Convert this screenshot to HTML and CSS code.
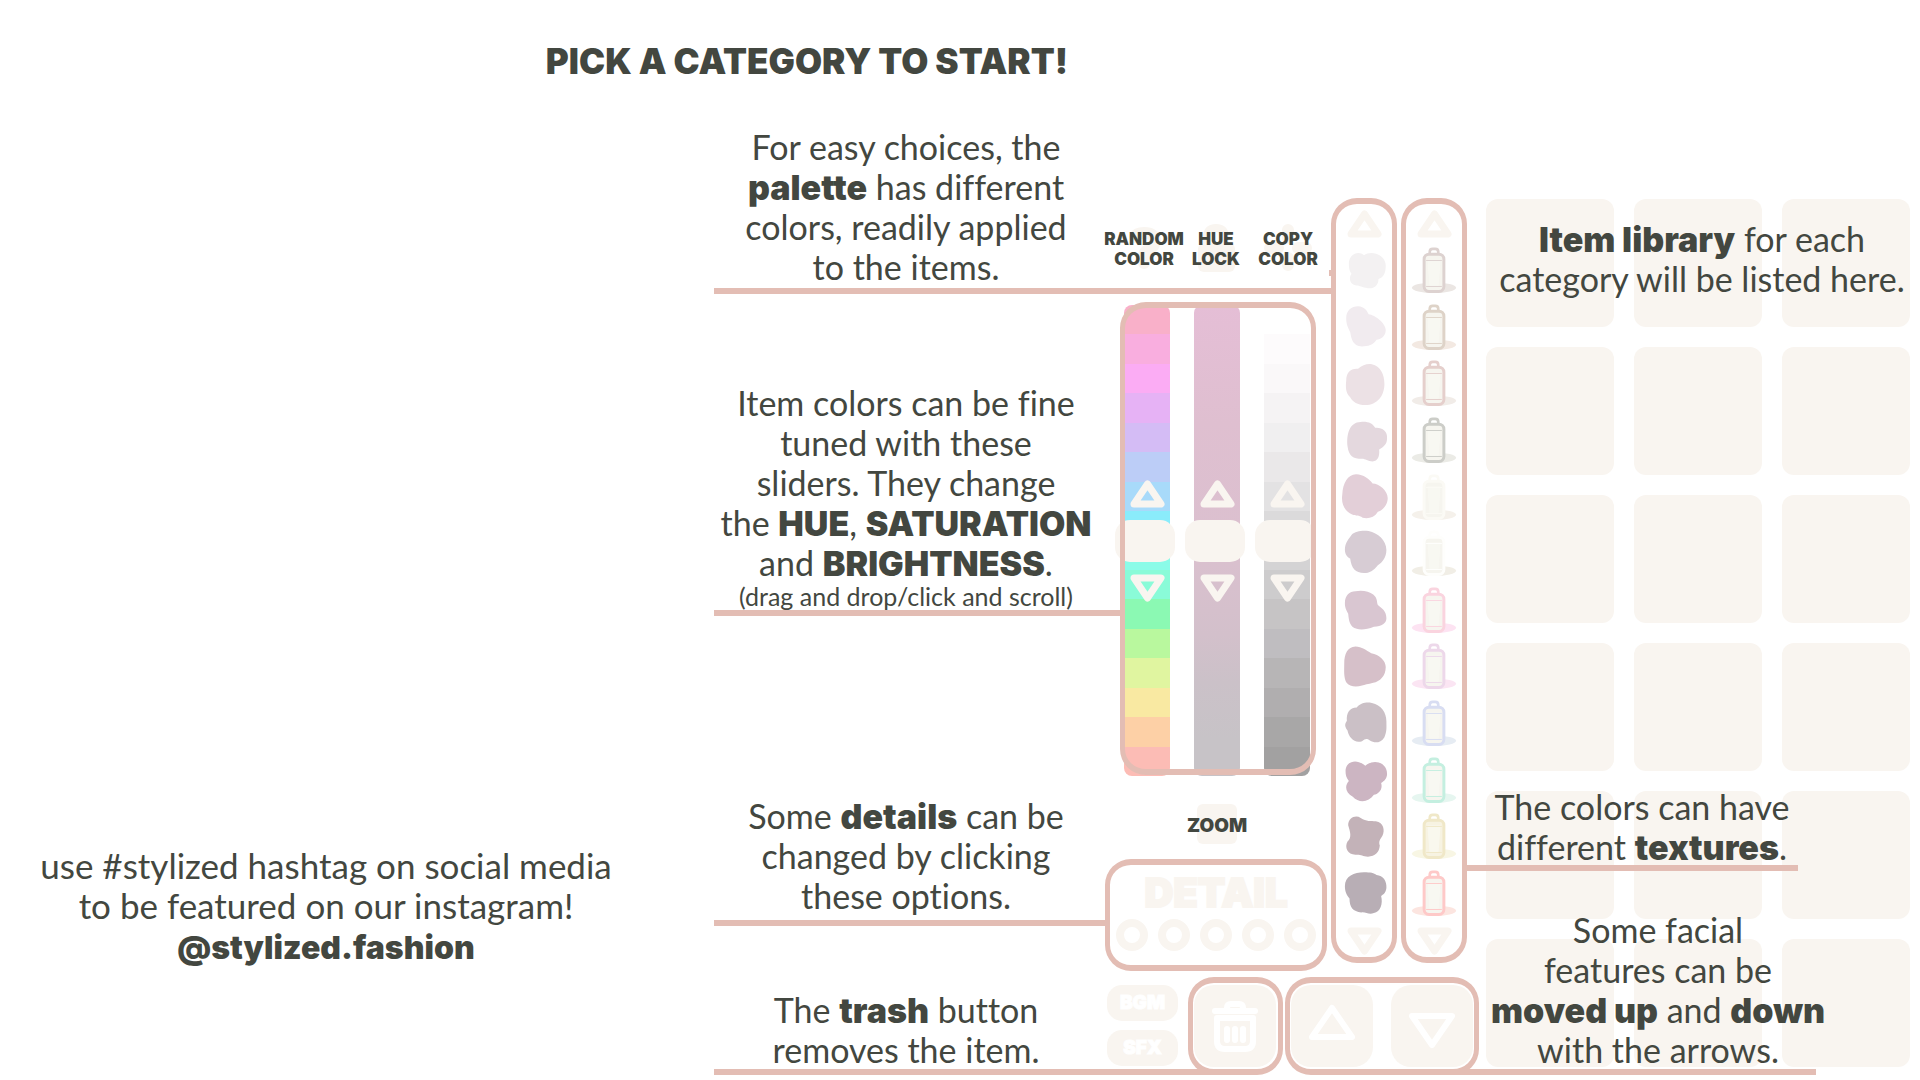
FILE: index.html
```html
<!DOCTYPE html>
<html lang="en">
<head>
<meta charset="utf-8">
<title>Stylized</title>
<link rel="stylesheet" href="styles.css">
</head>
<body>
<svg class="sprite" aria-hidden="true">
  <symbol id="up" viewBox="0 0 35 28"><path d="M17.5 4 31 24H4Z"/></symbol>
  <symbol id="down" viewBox="0 0 35 28"><path d="M17.5 24 31 4H4Z"/></symbol>
  <symbol id="bottle" viewBox="-72 -85 144 170">
    <ellipse class="floor" cx="0" cy="51" rx="67" ry="16"/>
    <path class="cap" d="M-13 -50v-8q0-9 9-9h8q9 0 9 9v8"/>
    <rect class="body" x="-30" y="-51" width="60" height="113" rx="15"/>
    <path class="shine" d="M-20-36H20L14 46H-14Z"/>
    <path class="seam" d="M-24-32H24M-24 47H24"/>
  </symbol>
</svg>

<main class="stage">
  <header class="header"><h1>PICK A CATEGORY TO START!</h1></header>

  <section class="intro">
    <p>use #stylized hashtag on social media<br>to be featured on our instagram!<br><b>@stylized.fashion</b></p>
  </section>

  <section class="guide">
    <p class="note note-palette">For easy choices, the<br><b>palette</b> has different<br>colors, readily applied<br>to the items.</p>
    <p class="note note-sliders">Item colors can be fine<br>tuned with these<br>sliders. They change<br>the <b>HUE</b>, <b>SATURATION</b><br>and <b>BRIGHTNESS</b>.<small>(drag and drop/click and scroll)</small></p>
    <p class="note note-detail">Some <b>details</b> can be<br>changed by clicking<br>these options.</p>
    <p class="note note-trash">The <b>trash</b> button<br>removes the item.</p>
  </section>

  <section class="tools">
    <div class="tools-top">
      <div class="controls">
        <div class="actions">
          <button class="action" type="button">
            <svg width="48" height="48" viewBox="0 0 48 48"><path d="M15 13Q17 9 24 9Q35 9 35 17Q35 22 28 26Q24 28 24 32M24 38v1"/></svg>
            <span>RANDOM<br>COLOR</span>
          </button>
          <button class="action" type="button">
            <svg width="48" height="48" viewBox="0 0 48 48"><path class="thin" d="M15 22V14Q15 4 24 4T33 14V22"/><rect class="solid" x="6" y="19" width="37" height="29" rx="6"/></svg>
            <span>HUE<br>LOCK</span>
          </button>
          <button class="action" type="button">
            <svg width="48" height="48" viewBox="0 0 48 48"><path d="M24 6v8M24 34v7M6 24h8M34 24h8"/></svg>
            <span>COPY<br>COLOR</span>
          </button>
        </div>

        <div class="sliders">
          <div class="slider">
            <input class="range hue" type="range" aria-label="Hue" value="50">
            <div class="steps"><button type="button" aria-label="Hue up"><svg class="tri"><use href="#up"/></svg></button><button type="button" aria-label="Hue down"><svg class="tri"><use href="#down"/></svg></button></div>
          </div>
          <div class="slider">
            <input class="range saturation" type="range" aria-label="Saturation" value="50">
            <div class="steps"><button type="button" aria-label="Saturation up"><svg class="tri"><use href="#up"/></svg></button><button type="button" aria-label="Saturation down"><svg class="tri"><use href="#down"/></svg></button></div>
          </div>
          <div class="slider">
            <input class="range brightness" type="range" aria-label="Brightness" value="50">
            <div class="steps"><button type="button" aria-label="Brightness up"><svg class="tri"><use href="#up"/></svg></button><button type="button" aria-label="Brightness down"><svg class="tri"><use href="#down"/></svg></button></div>
          </div>
        </div>

        <button class="zoom" type="button">ZOOM</button>

        <fieldset class="detail">
          <legend class="detail-title">DETAIL</legend>
          <div class="rings">
            <input type="radio" name="detail" aria-label="Detail 1">
            <input type="radio" name="detail" aria-label="Detail 2">
            <input type="radio" name="detail" aria-label="Detail 3">
            <input type="radio" name="detail" aria-label="Detail 4">
            <input type="radio" name="detail" aria-label="Detail 5">
          </div>
        </fieldset>
      </div>

      <div class="strip palette">
        <button type="button" aria-label="Previous colors"><svg class="tri"><use href="#up"/></svg></button>
        <div class="cells">
          <button type="button" aria-label="Color 1"><svg class="swatch" viewBox="-72 -85 144 170"><path fill="#f3f1f2" d="M-46-22C-46-50-18-64 0-48C22-64 66-50 66-16C66 8 58 20 44 24C44 44 30 54 12 52C-6 50-14 44-22 44C-42 42-48 22-38 8C-44 0-46-8-46-22Z"/></svg></button>
          <button type="button" aria-label="Color 2"><svg class="swatch" viewBox="-72 -85 144 170"><path fill="#f1ebef" d="M-54-30C-54-54-38-66-18-66C2-64 8-54 14-42C34-40 66-14 66 6C66 26 50 34 38 36C28 52 12 56-6 56C-36 54-38 32-42 12C-52-6-54-16-54-30Z"/></svg></button>
          <button type="button" aria-label="Color 3"><svg class="swatch" viewBox="-72 -85 144 170"><path fill="#ece1e5" d="M-54-10C-54-36-40-48-18-46C-6-58 10-62 24-60C50-54 62-30 62 0C62 36 40 64 4 64C-20 64-34 54-42 40C-56 28-56 8-54-10Z"/></svg></button>
          <button type="button" aria-label="Color 4"><svg class="swatch" viewBox="-72 -85 144 170"><path fill="#e4d8de" d="M-50 16C-54-20-44-58-10-58C12-60 26-54 34-40C54-42 72-30 70-8C70 10 60 18 46 26C48 46 42 62 26 62C12 62 4 54-6 54C-34 54-46 46-50 16Z"/></svg></button>
          <button type="button" aria-label="Color 5"><svg class="swatch" viewBox="-72 -85 144 170"><path fill="#e3cfd8" d="M-66-10C-64-46-50-70-24-72C0-70 14-60 26-44C46-44 72-22 72 0C72 22 56 38 42 42C32 60 12 64-4 60C-16 50-24 56-36 50C-58 40-70 20-66-10Z"/></svg></button>
          <button type="button" aria-label="Color 6"><svg class="swatch" viewBox="-72 -85 144 170"><path fill="#d7ccd4" d="M-58-14C-58-34-46-46-38-58C-26-72 0-72 14-70C42-64 68-42 68-12C68 10 56 26 42 34C30 50 16 58 0 58C-26 58-38 44-42 14C-52 8-58 0-58-14Z"/></svg></button>
          <button type="button" aria-label="Color 7"><svg class="swatch" viewBox="-72 -85 144 170"><path fill="#d9c6d1" d="M-58-24C-58-48-44-60-26-60C-6-64 16-60 28-50C42-38 38-28 42-18C54-8 68 0 68 22C68 38 54 46 30 48C10 56-10 58-22 54C-44 48-46 28-48 8C-56-6-58-12-58-24Z"/></svg></button>
          <button type="button" aria-label="Color 8"><svg class="swatch" viewBox="-72 -85 144 170"><path fill="#d6c0c9" d="M-60-10C-60-40-50-60-26-62C-6-62 6-50 22-42C46-38 66-20 66 0C66 28 48 44 28 48C12 52 2 54-6 56C-24 62-44 60-54 46C-62 30-60 10-60-10Z"/></svg></button>
          <button type="button" aria-label="Color 9"><svg class="swatch" viewBox="-72 -85 144 170"><path fill="#cbc0c6" d="M-52-10C-54-32-44-50-22-50C-8-66 8-66 24-64C52-58 68-36 68-8C68 10 70 22 62 40C50 60 30 58 18 50C6 42 4 46-6 52C-28 60-46 42-50 20C-60 6-58 0-52-10Z"/></svg></button>
          <button type="button" aria-label="Color 10"><svg class="swatch" viewBox="-72 -85 144 170"><path fill="#ccb5c2" d="M-56-30C-56-60-22-70 4-46C30-70 70-56 70-22C70-8 62 0 52 6C58 26 44 40 30 42C14 66-16 68-34 48C-56 36-60 16-46 0C-54-10-56-18-56-30Z"/></svg></button>
          <button type="button" aria-label="Color 11"><svg class="swatch" viewBox="-72 -85 144 170"><path fill="#c3b2b8" d="M-48-36C-48-58-26-68-10-58C8-46 20-50 36-48C60-44 64-20 56-4C48 8 44 14 48 26C46 48 34 58 12 60C-6 58-10 52-26 54C-50 54-60 32-50 14C-36 0-42-16-48-36Z"/></svg></button>
          <button type="button" aria-label="Color 12"><svg class="swatch" viewBox="-72 -85 144 170"><path fill="#b8aeb5" d="M-58-24C-58-54-30-66 0-66C20-66 30-64 38-58C58-56 70-40 68-18C66-2 58 2 52 6C58 30 50 54 30 58C14 64 6 54-8 56C-34 54-44 40-44 14C-52 4-58-6-58-24Z"/></svg></button>
        </div>
        <button type="button" aria-label="More colors"><svg class="tri"><use href="#down"/></svg></button>
      </div>

      <div class="strip textures">
        <button type="button" aria-label="Previous textures"><svg class="tri"><use href="#up"/></svg></button>
        <div class="cells">
          <button type="button" aria-label="Texture 1"><svg class="swatch t1"><use href="#bottle"/></svg></button>
          <button type="button" aria-label="Texture 2"><svg class="swatch t2"><use href="#bottle"/></svg></button>
          <button type="button" aria-label="Texture 3"><svg class="swatch t3"><use href="#bottle"/></svg></button>
          <button type="button" aria-label="Texture 4"><svg class="swatch t4"><use href="#bottle"/></svg></button>
          <button type="button" aria-label="Texture 5"><svg class="swatch t5"><use href="#bottle"/></svg></button>
          <button type="button" aria-label="Texture 6"><svg class="swatch t6"><use href="#bottle"/></svg></button>
          <button type="button" aria-label="Texture 7"><svg class="swatch t7"><use href="#bottle"/></svg></button>
          <button type="button" aria-label="Texture 8"><svg class="swatch t8"><use href="#bottle"/></svg></button>
          <button type="button" aria-label="Texture 9"><svg class="swatch t9"><use href="#bottle"/></svg></button>
          <button type="button" aria-label="Texture 10"><svg class="swatch t10"><use href="#bottle"/></svg></button>
          <button type="button" aria-label="Texture 11"><svg class="swatch t11"><use href="#bottle"/></svg></button>
          <button type="button" aria-label="Texture 12"><svg class="swatch t12"><use href="#bottle"/></svg></button>
        </div>
        <button type="button" aria-label="More textures"><svg class="tri"><use href="#down"/></svg></button>
      </div>
    </div>

    <div class="tools-bottom">
      <div class="sound">
        <button class="pill" type="button">BGM</button>
        <button class="pill" type="button">SFX</button>
      </div>
      <div class="frame">
        <button class="tile" type="button" aria-label="Trash">
          <svg width="46" height="52" viewBox="0 0 46 52"><path d="M3 11H43M15 10V8Q15 4 19 4H27Q31 4 31 8V10"/><path d="M5 18H41V41Q41 49 33 49H13Q5 49 5 41Z"/><path d="M15 29V40M23 29V40M31 29V40"/></svg>
        </button>
      </div>
      <div class="frame frame-wide">
        <button class="tile" type="button" aria-label="Move up">
          <svg width="48" height="52" viewBox="0 0 48 52"><path d="M24 8 44 37H4Z"/></svg>
        </button>
        <button class="tile" type="button" aria-label="Move down">
          <svg width="48" height="52" viewBox="0 0 48 52"><path d="M24 45 44 16H4Z"/></svg>
        </button>
      </div>
    </div>
  </section>

  <section class="library">
    <div class="items">
      <div></div><div></div><div></div><div></div><div></div><div></div>
      <div></div><div></div><div></div><div></div><div></div><div></div>
      <div></div><div></div><div></div><div></div><div></div><div></div>
    </div>
    <p class="note note-library"><b>Item library</b> for each<br>category will be listed here.</p>
    <p class="note note-textures">The colors can have<br>different <b>textures</b>.</p>
    <p class="note note-move">Some facial<br>features can be<br><b>moved up</b> and <b>down</b><br>with the arrows.</p>
  </section>
</main>
</body>
</html>
```
FILE: styles.css
```css
:root {
  --ink: #434740;
  --line: #e3bdb4;
  --cream: #f9f5f0;
  --heavy: Inter, "Open Sans", sans-serif;
}

* { box-sizing: border-box; }

body {
  margin: 0;
  background: #fff;
  color: var(--ink);
  font: 400 34px/40px Lato, "Open Sans", sans-serif;
  font-variant-ligatures: none;
}

h1, p { margin: 0; }

b, h1 {
  font-family: var(--heavy);
  font-size: 34px;
  font-weight: 900;
  line-height: 1;
}

h1 { font-size: 35px; line-height: 40px; }

button {
  padding: 0;
  border: 0;
  background: none;
  color: inherit;
  font: inherit;
  cursor: pointer;
}

svg { display: block; }

.sprite { position: absolute; width: 0; height: 0; }

.stage {
  display: grid;
  grid-template-columns: minmax(0, 1fr) 384px 374px 424px;
  grid-template-rows: 86px auto;
  column-gap: 7px;
  min-height: 100vh;
  padding-right: 10px;
}

.stage > section { grid-row: 2; }

.header {
  grid-column: 1 / 3;
  padding: 41px 30px 0 0;
  text-align: right;
}

/* Left side: character area and credits */
.intro {
  display: flex;
  flex-direction: column;
  justify-content: flex-end;
  padding: 0 55px 115px 0;
  font-size: 35px;
  text-align: center;
  white-space: nowrap;
}

.intro b { font-size: 32px; }

/* Notes with a rule that runs to the part they explain */
.guide {
  display: flex;
  flex-direction: column;
  padding-top: 41px;
}

.note {
  position: relative;
  z-index: 1;
  padding-bottom: 7px;
  text-align: center;
  white-space: nowrap;
}

.note::after {
  content: "";
  position: absolute;
  bottom: 0;
  left: var(--rule-start, 0);
  width: var(--rule);
  height: 6px;
  background: var(--line);
}

.note small {
  display: block;
  font-size: 25px;
  line-height: 26px;
}

.note-palette { --rule: 619px; }
.note-sliders { --rule: 408px; margin-top: 89px; }
.note-detail { --rule: 393px; margin-top: 180px; padding-bottom: 10px; }
.note-trash { --rule: 510px; margin-top: 64px; padding-bottom: 5px; }

/* Tools */
.tools { padding-top: 112px; }
.tools-top { display: flex; }

.controls {
  display: flex;
  flex-direction: column;
  align-items: center;
  width: 222px;
  padding-top: 26px;
}

.actions { display: flex; }

.action {
  display: grid;
  place-content: center;
  place-items: center;
  width: 72px;
  height: 48px;
  font-family: var(--heavy);
  font-size: 17px;
  font-weight: 900;
  line-height: 20px;
}

.action > * { grid-area: 1 / 1; }
.action span { z-index: 1; padding-top: 2px; }

.action svg {
  fill: none;
  stroke: var(--cream);
  stroke-width: 12;
  stroke-linecap: round;
}

.action .thin { stroke-width: 8; }
.action .solid { fill: var(--cream); stroke: none; }

.sliders {
  position: relative;
  display: flex;
  justify-content: center;
  gap: 24px;
  width: 196px;
  height: 473px;
  margin: 30px 0 0 4px;
  padding: 3px 2px 0 0;
}

.sliders::after {
  content: "";
  position: absolute;
  inset: 0;
  border: 6px solid var(--line);
  border-width: 6px 5px;
  border-radius: 26px;
  pointer-events: none;
}

.slider {
  display: grid;
  place-items: center;
  width: 46px;
  height: 471px;
}

.slider > * { grid-area: 1 / 1; }

.range {
  width: 46px;
  height: 471px;
  margin: 0;
  border-radius: 8px;
  appearance: none;
  writing-mode: vertical-lr;
}

.range::-webkit-slider-thumb {
  width: 60px;
  height: 42px;
  margin-left: -5px;
  border: 0;
  border-radius: 15px;
  background: var(--cream);
  appearance: none;
}

.hue {
  background: linear-gradient(
    #f9b0c9 6.25%, #f9aedf 0 12.5%, #fbacf4 0 18.75%, #e6b2f5 0 25%,
    #d4bcf5 0 31.25%, #bccdf7 0 37.5%, #a8dafa 0 43.75%, #8aecfb 0 50%,
    #8bfbe8 0 56.25%, #8afbd8 0 62.5%, #8bf9b3 0 68.75%, #b9f89e 0 75%,
    #e0f5a0 0 81.25%, #f9e9a2 0 87.5%, #fdd0a6 0 93.75%, #fcbcb5 0);
}

.saturation {
  background: linear-gradient(#e5bed6, #dfbfd0 25%, #dbc0cf 50%, #d3c0cb 70%, #cbc1c8 80%, #c7c3c7 92%);
}

.brightness {
  background: linear-gradient(
    #fff 6.25%, #fdfbfc 0 12.5%, #faf8f9 0 18.75%, #f5f3f4 0 25%,
    #f0eff0 0 31.25%, #eae8e9 0 37.5%, #e3e2e3 0 43.75%, #dbdadb 0 50%,
    #d4d3d4 0 56.25%, #cdcccd 0 62.5%, #c6c4c5 0 68.75%, #bfbdc0 0 75%,
    #b7b5b6 0 81.25%, #b0aeaf 0 87.5%, #a8a7a7 0 93.75%, #a2a1a1 0);
}

.steps {
  display: flex;
  flex-direction: column;
  gap: 66px;
  z-index: 1;
}

.tri {
  width: 35px;
  height: 28px;
  fill: none;
  stroke: var(--cream);
  stroke-width: 7;
  stroke-linejoin: round;
}

.zoom {
  display: flex;
  align-items: center;
  justify-content: center;
  width: 40px;
  height: 40px;
  margin: 29px 0 15px 2px;
  padding-top: 4px;
  border-radius: 6px;
  background: var(--cream);
  font-family: var(--heavy);
  font-size: 19px;
  font-weight: 900;
}

.detail {
  display: flex;
  flex-direction: column;
  align-items: center;
  width: 222px;
  height: 112px;
  margin: 0;
  padding: 6px 0;
  border: 6px solid var(--line);
  border-width: 6px 5px;
  border-radius: 26px;
}

.detail-title {
  float: left;
  width: 100%;
  padding: 0;
  color: var(--cream);
  font-family: var(--heavy);
  font-size: 40px;
  font-weight: 900;
  line-height: 44px;
  text-align: center;
  -webkit-text-stroke: 2px var(--cream);
}

.rings { display: flex; gap: 10px; margin-top: 4px; }

.rings input {
  width: 32px;
  height: 32px;
  margin: 0;
  border: 8px solid var(--cream);
  border-radius: 50%;
  appearance: none;
}

.strip {
  display: flex;
  flex-direction: column;
  align-items: center;
  gap: 5px;
  width: 66px;
  margin: 0 0 8px 4px;
  padding: 6px 0 2px;
  border: 6px solid var(--line);
  border-width: 6px 5px;
  border-radius: 26px;
}

.palette { position: relative; }

.palette::before {
  content: "";
  position: absolute;
  top: 66px;
  left: -7px;
  width: 2px;
  height: 6px;
  background: var(--line);
}

.cells {
  display: grid;
  flex: 1;
  grid-auto-rows: 1fr;
}

.cells button { display: grid; place-items: center; }

.swatch { width: 48px; height: 56px; }

.floor { fill: var(--floor); }
.cap { fill: none; stroke: var(--glass); stroke-width: 8; }
.body { fill: var(--fill, #f6f5ef); stroke: var(--glass); stroke-width: 9; }
.shine { fill: #faf9f4; opacity: 0.7; }
.seam { fill: none; stroke: var(--glass); stroke-width: 3; }

.t1 { --glass: #ddd2d0; --floor: #ebe6e3; }
.t2 { --glass: #ded3c8; --floor: #f3e9e2; }
.t3 { --glass: #e5cfcc; --floor: #f1ece8; }
.t4 { --glass: #cccdc8; --floor: #ebebe6; }
.t5 { --glass: #fbfaf5; --floor: #f5f1eb; }
.t6 { --glass: #fefefc; --floor: #f1eee6; }
.t7 { --glass: #fad4df; --floor: #fde3f2; }
.t8 { --glass: #edd8ea; --floor: #fbe5f3; }
.t9 { --glass: #d8ddf2; --floor: #e6ecf3; }
.t10 { --glass: #c4efe0; --floor: #e6f6f0; }
.t11 { --glass: #f0e8c8; --floor: #f8f6e4; --fill: #f7f3e2; }
.t12 { --glass: #fec9c8; --floor: #fce5e0; }

.tools-bottom {
  display: flex;
  margin-top: 6px;
}

.sound {
  display: flex;
  flex-direction: column;
  gap: 9px;
  margin-right: 10px;
  padding: 8px 0 0 2px;
}

.pill {
  width: 71px;
  height: 36px;
  border-radius: 15px;
  background: var(--cream);
  color: #fff;
  font-family: var(--heavy);
  font-size: 19px;
  font-weight: 900;
  line-height: 36px;
  -webkit-text-stroke: 1px #fff;
}

.frame {
  display: flex;
  justify-content: space-between;
  width: 95px;
  height: 98px;
  margin-right: 2px;
  padding: 2px 1px;
  border: 6px solid var(--line);
  border-width: 6px 5px;
  border-radius: 26px;
}

.frame-wide { width: 194px; margin: 0; }

.tile {
  display: grid;
  place-items: center;
  width: 82px;
  height: 82px;
  border-radius: 20px;
  background: var(--cream);
}

.tile svg {
  fill: none;
  stroke: #fff;
  stroke-width: 6;
  stroke-linecap: round;
  stroke-linejoin: round;
}

/* Item library with the notes laid over it */
.library {
  position: relative;
  padding-top: 113px;
}

.items {
  display: grid;
  grid-template-columns: repeat(3, 1fr);
  gap: 20px;
}

.items div {
  aspect-ratio: 1;
  border-radius: 12px;
  background: var(--cream);
}

.library .note { position: absolute; }
.note-library { top: 133px; left: 4px; width: 424px; }
.note-textures { --rule-start: -20px; --rule: 332px; top: 701px; left: 0; width: 312px; padding-bottom: 4px; }
.note-move { --rule-start: -40px; --rule: 368px; top: 824px; left: 2px; width: 340px; padding-bottom: 5px; }
```
